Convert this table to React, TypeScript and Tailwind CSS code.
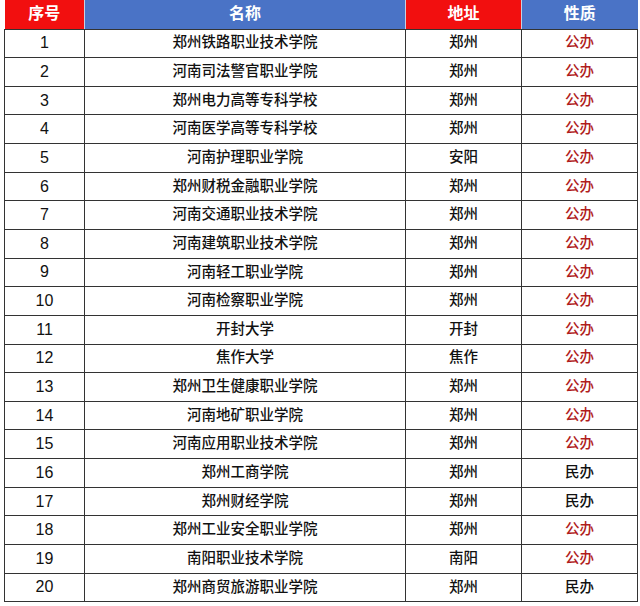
import React from "react";

const rows: [string, string, string, string][] = [
  ["1", "郑州铁路职业技术学院", "郑州", "公办"],
  ["2", "河南司法警官职业学院", "郑州", "公办"],
  ["3", "郑州电力高等专科学校", "郑州", "公办"],
  ["4", "河南医学高等专科学校", "郑州", "公办"],
  ["5", "河南护理职业学院", "安阳", "公办"],
  ["6", "郑州财税金融职业学院", "郑州", "公办"],
  ["7", "河南交通职业技术学院", "郑州", "公办"],
  ["8", "河南建筑职业技术学院", "郑州", "公办"],
  ["9", "河南轻工职业学院", "郑州", "公办"],
  ["10", "河南检察职业学院", "郑州", "公办"],
  ["11", "开封大学", "开封", "公办"],
  ["12", "焦作大学", "焦作", "公办"],
  ["13", "郑州卫生健康职业学院", "郑州", "公办"],
  ["14", "河南地矿职业学院", "郑州", "公办"],
  ["15", "河南应用职业技术学院", "郑州", "公办"],
  ["16", "郑州工商学院", "郑州", "民办"],
  ["17", "郑州财经学院", "郑州", "民办"],
  ["18", "郑州工业安全职业学院", "郑州", "公办"],
  ["19", "南阳职业技术学院", "南阳", "公办"],
  ["20", "郑州商贸旅游职业学院", "郑州", "民办"],
];

const font = "font-['Liberation_Sans','Noto_Sans_CJK_SC',sans-serif]";

export default function App() {
  return (
    <div className={`w-[640px] h-[606px] bg-white pl-[4px] ${font}`}>
      <table className="border-collapse table-fixed w-[633px] text-[#111]">
        <colgroup>
          <col className="w-[80px]" />
          <col className="w-[321px]" />
          <col className="w-[116px]" />
          <col className="w-[116px]" />
        </colgroup>
        <thead>
          <tr className="h-[29px] text-white font-bold text-[16px]">
            <th className="bg-[#f20f0f] border-r border-r-[#c8d0e0] border-b-[1.5px] border-b-[#333] p-0">序号</th>
            <th className="bg-[#4a73c6] border-r border-r-[#c8d0e0] border-b-[1.5px] border-b-[#333] p-0">名称</th>
            <th className="bg-[#f20f0f] border-r border-r-[#c8d0e0] border-b-[1.5px] border-b-[#333] p-0">地址</th>
            <th className="bg-[#4a73c6] border-b-[1.5px] border-b-[#333] p-0">性质</th>
          </tr>
        </thead>
        <tbody>
          {rows.map(([n, name, addr, type]) => (
            <tr key={n} className="h-[28.65px]">
              <td className="border-[1.5px] border-[#333] text-center text-[16px] p-0">{n}</td>
              <td className="border-[1.5px] border-[#333] text-center text-[14.5px] font-medium p-0">{name}</td>
              <td className="border-[1.5px] border-[#333] text-center text-[14.5px] font-medium p-0">{addr}</td>
              <td
                className={`border-[1.5px] border-[#333] text-center text-[14.5px] font-medium p-0 ${
                  type === "公办" ? "text-[#b01c1c]" : "text-[#111]"
                }`}
              >
                {type}
              </td>
            </tr>
          ))}
        </tbody>
      </table>
    </div>
  );
}
